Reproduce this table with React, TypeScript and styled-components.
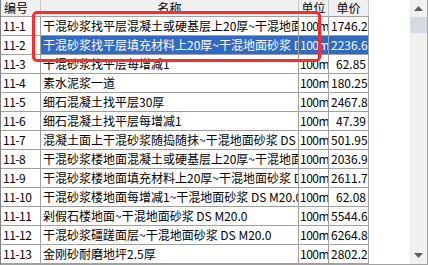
import React from 'react'
import styled, { createGlobalStyle } from 'styled-components'

const GlobalStyle = createGlobalStyle`
  html, body {
    margin: 0;
    padding: 0;
    background: #fff;
  }
  body {
    font-family: "Noto Sans CJK SC", "Liberation Sans", sans-serif;
    font-size: 12px;
    color: #000;
  }
`

const Frame = styled.div`
  position: relative;
  display: flex;
  width: 428px;
  height: 265px;
  box-sizing: border-box;
  border-left: 1px solid #828282;
  border-right: 1px solid #a0a0a0;
  border-bottom: 1px solid #a0a0a0;
  background: #fff;
  overflow: hidden;
`

const Grid = styled.div`
  flex: 1;
  display: grid;
  grid-template-columns: 40px 258px 30px 40px;
  grid-template-rows: 17px;
  grid-auto-rows: 19px;
  align-content: start;
`

const HeadCell = styled.div<{ $align?: 'left' | 'center' }>`
  box-sizing: border-box;
  display: flex;
  align-items: center;
  justify-content: ${({ $align }) => ($align === 'left' ? 'flex-start' : 'center')};
  padding: 0 3px;
  background: #f0f0f0;
  border-right: 1px solid #c8c8c8;
  border-bottom: 1px solid #a0a0a0;
  line-height: 1;
  white-space: nowrap;
  overflow: hidden;
`

const Cell = styled.div<{ $selected?: boolean; $align?: 'left' | 'right'; $pad?: number; $tight?: boolean }>`
  box-sizing: border-box;
  padding: 0 ${({ $pad }) => $pad ?? 2}px;
  border-right: 1px solid #a0a0a0;
  border-bottom: 1px solid #a0a0a0;
  background: ${({ $selected }) => ($selected ? '#316ac5' : '#fff')};
  color: ${({ $selected }) => ($selected ? '#fff' : '#000')};
  text-align: ${({ $align }) => $align ?? 'left'};
  letter-spacing: ${({ $tight }) => ($tight ? '-0.5px' : '0')};
  line-height: 18px;
  white-space: nowrap;
  overflow: hidden;
`

const ScrollBar = styled.div`
  width: 17px;
  display: flex;
  flex-direction: column;
  background: #f0f0f0;
`

const ArrowButton = styled.div`
  height: 17px;
  display: flex;
  align-items: center;
  justify-content: center;
  flex-shrink: 0;
`

const Thumb = styled.div`
  height: 16px;
  background: #d6dbe3;
  flex-shrink: 0;
`

const Track = styled.div`
  flex: 1;
`

const Highlight = styled.div`
  position: absolute;
  left: 31px;
  top: 11px;
  width: 289px;
  height: 51px;
  box-sizing: border-box;
  border: 3px solid #ff2a2a;
  border-radius: 5px;
  pointer-events: none;
`

type Item = { code: string; name: string; unit: string; price: string }

const items: Item[] = [
  { code: '11-1', name: '干混砂浆找平层混凝土或硬基层上20厚~干混地面砂浆 DS M20.0', unit: '100m²', price: '1746.24' },
  { code: '11-2', name: '干混砂浆找平层填充材料上20厚~干混地面砂浆 DS M20.0', unit: '100m²', price: '2236.68' },
  { code: '11-3', name: '干混砂浆找平层每增减1', unit: '100m²', price: '62.85' },
  { code: '11-4', name: '素水泥浆一道', unit: '100m²', price: '180.25' },
  { code: '11-5', name: '细石混凝土找平层30厚', unit: '100m²', price: '2467.85' },
  { code: '11-6', name: '细石混凝土找平层每增减1', unit: '100m²', price: '47.39' },
  { code: '11-7', name: '混凝土面上干混砂浆随捣随抹~干混地面砂浆 DS M20.0', unit: '100m²', price: '501.95' },
  { code: '11-8', name: '干混砂浆楼地面混凝土或硬基层上20厚~干混地面砂浆 DS M20.0', unit: '100m²', price: '2036.92' },
  { code: '11-9', name: '干混砂浆楼地面填充材料上20厚~干混地面砂浆 DS M20.0', unit: '100m²', price: '2611.73' },
  { code: '11-10', name: '干混砂浆楼地面每增减1~干混地面砂浆 DS M20.0', unit: '100m²', price: '62.08' },
  { code: '11-11', name: '剁假石楼地面~干混地面砂浆 DS M20.0', unit: '100m²', price: '5544.65' },
  { code: '11-12', name: '干混砂浆礓蹉面层~干混地面砂浆 DS M20.0', unit: '100m²', price: '6264.84' },
  { code: '11-13', name: '金刚砂耐磨地坪2.5厚', unit: '100m²', price: '2802.25' },
]

const selectedCode = '11-2'

const Arrow = ({ down }: { down?: boolean }) => (
  <svg width="9" height="5" viewBox="0 0 9 5">
    <polygon points={down ? '0,0 9,0 4.5,5' : '0,5 9,5 4.5,0'} fill="#606060" />
  </svg>
)

export default function App() {
  return (
    <>
      <GlobalStyle />
      <Frame>
        <Grid>
          <HeadCell $align="left">编号</HeadCell>
          <HeadCell>名称</HeadCell>
          <HeadCell>单位</HeadCell>
          <HeadCell>单价</HeadCell>
          {items.map((it) => {
            const sel = it.code === selectedCode
            return (
              <React.Fragment key={it.code}>
                <Cell $tight>{it.code}</Cell>
                <Cell $selected={sel}>{it.name}</Cell>
                <Cell $selected={sel} $pad={1} $tight>{it.unit}</Cell>
                <Cell $selected={sel} $align="right">{it.price}</Cell>
              </React.Fragment>
            )
          })}
        </Grid>
        <ScrollBar>
          <ArrowButton>
            <Arrow />
          </ArrowButton>
          <Thumb />
          <Track />
          <ArrowButton>
            <Arrow down />
          </ArrowButton>
        </ScrollBar>
        <Highlight />
      </Frame>
    </>
  )
}
